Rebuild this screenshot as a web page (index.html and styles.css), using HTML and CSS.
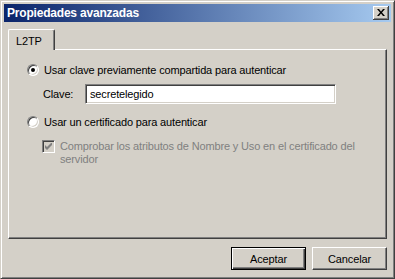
FILE: index.html
```html
<!DOCTYPE html>
<html lang="es">
<head>
<meta charset="utf-8">
<link rel="stylesheet" href="styles.css">
</head>
<body>
<div class="window">
  <div class="titlebar">
    <span class="title">Propiedades avanzadas</span>
    <button class="close" aria-label="Cerrar">
      <svg width="8" height="7" viewBox="0 0 8 7"><path d="M0 0h2l2 2.5L6 0h2L5 3.5 8 7H6L4 4.5 2 7H0l3-3.5z" fill="#000"/></svg>
    </button>
  </div>
  <div class="content">
    <div class="tabs">
      <div class="tab">L2TP</div>
    </div>
    <div class="panel">
      <label class="option">
        <span class="radio checked"></span>
        <span>Usar clave previamente compartida para autenticar</span>
      </label>
      <div class="keyrow">
        <span class="keylabel">Clave:</span>
        <div class="input">secretelegido</div>
      </div>
      <label class="option second">
        <span class="radio"></span>
        <span>Usar un certificado para autenticar</span>
      </label>
      <div class="check-row">
        <span class="checkbox">
          <svg width="7" height="7" viewBox="0 0 7 7"><path d="M0 2v3l2 2 5-5V-1L2 4z" fill="#808080"/></svg>
        </span>
        <span class="check-text">Comprobar los atributos de Nombre y Uso en el certificado del servidor</span>
      </div>
    </div>
    <div class="buttons">
      <button class="btn default">Aceptar</button>
      <button class="btn">Cancelar</button>
    </div>
  </div>
</div>
</body>
</html>
```
FILE: styles.css
```css
* { box-sizing: border-box; }
html, body { margin: 0; padding: 0; }
body {
  background: #d4d0c8;
  font-family: Tahoma, "Liberation Sans", "DejaVu Sans", sans-serif;
  font-size: 11px;
  letter-spacing: -0.15px;
  color: #000;
}
.window {
  width: 395px;
  height: 279px;
  background: #d4d0c8;
  border-top: 1px solid #d4d0c8;
  border-left: 1px solid #d4d0c8;
  border-right: 1px solid #404040;
  border-bottom: 1px solid #404040;
  box-shadow: inset 1px 1px 0 #fff, inset -1px -1px 0 #808080;
  padding: 3px;
  display: flex;
  flex-direction: column;
}
.titlebar {
  height: 18px;
  background: linear-gradient(to right, #0a246a, #a6caf0);
  display: flex;
  align-items: center;
  padding: 0 2px 0 3px;
  flex-shrink: 0;
}
.title {
  color: #fff;
  font-weight: bold;
  font-size: 12px;
  letter-spacing: -0.2px;
  flex: 1;
}
.close {
  width: 16px;
  height: 14px;
  padding: 0 1px 1px 0;
  margin: 0;
  background: #d4d0c8;
  border: none;
  box-shadow: inset -1px -1px 0 #404040, inset 1px 1px 0 #fff, inset -2px -2px 0 #808080;
  display: flex;
  align-items: center;
  justify-content: center;
}
.content {
  flex: 1;
  display: flex;
  flex-direction: column;
  padding: 7px 4px 0 4px;
}
.tabs {
  display: flex;
  height: 21px;
  position: relative;
  z-index: 1;
}
.tab {
  width: 47px;
  height: 21px;
  padding: 5px 0 0 7px;
  background: #d4d0c8;
  border-top: 1px solid #fff;
  border-left: 1px solid #fff;
  border-right: 1px solid #404040;
  box-shadow: inset -1px 0 0 #808080;
  border-radius: 2px 2px 0 0;
}
.panel {
  height: 190px;
  margin-top: -1px;
  border-top: 1px solid #fff;
  border-left: 1px solid #fff;
  border-right: 1px solid #404040;
  border-bottom: 1px solid #404040;
  box-shadow: inset -1px -1px 0 #808080;
  padding: 13px 0 0 18px;
}
.option {
  display: flex;
  align-items: center;
  height: 13px;
  gap: 5px;
}
.radio {
  width: 12px;
  height: 12px;
  border-radius: 50%;
  background: #fff;
  border: 1px solid;
  border-color: #808080 #fff #fff #808080;
  box-shadow: inset 1px 1px 0 #404040, inset -1px -1px 0 #d4d0c8;
  position: relative;
  flex-shrink: 0;
}
.radio.checked::after {
  content: "";
  position: absolute;
  left: 3px;
  top: 3px;
  width: 4px;
  height: 4px;
  border-radius: 50%;
  background: #000;
}
.keyrow {
  display: flex;
  align-items: center;
  margin-top: 8px;
  padding-left: 16px;
}
.keylabel {
  width: 42px;
}
.input {
  width: 251px;
  height: 20px;
  background: #fff;
  border: 1px solid;
  border-color: #808080 #fff #fff #808080;
  box-shadow: inset 1px 1px 0 #404040, inset -1px -1px 0 #d4d0c8;
  padding: 3px 0 0 4px;
}
.option.second {
  margin-top: 11px;
}
.check-row {
  display: flex;
  margin-top: 12px;
  padding-left: 15px;
  gap: 5px;
}
.checkbox {
  width: 13px;
  height: 13px;
  flex-shrink: 0;
  background: #d4d0c8;
  border: 1px solid;
  border-color: #808080 #fff #fff #808080;
  box-shadow: inset 1px 1px 0 #404040, inset -1px -1px 0 #d4d0c8;
  display: flex;
  align-items: center;
  justify-content: center;
}
.check-text {
  color: #808080;
  width: 302px;
  line-height: 13px;
}
.buttons {
  display: flex;
  justify-content: flex-end;
  gap: 6px;
  padding: 8px 0 0 0;
}
.btn {
  width: 75px;
  height: 23px;
  font-family: inherit;
  font-size: 11px;
  letter-spacing: inherit;
  background: #d4d0c8;
  color: #000;
  margin: 0;
  padding: 0;
  border: 1px solid;
  border-color: #fff #404040 #404040 #fff;
  box-shadow: inset -1px -1px 0 #808080;
}
.btn.default {
  border: 1px solid #000;
  box-shadow: inset 1px 1px 0 #fff, inset -1px -1px 0 #404040, inset -2px -2px 0 #808080;
}
```
